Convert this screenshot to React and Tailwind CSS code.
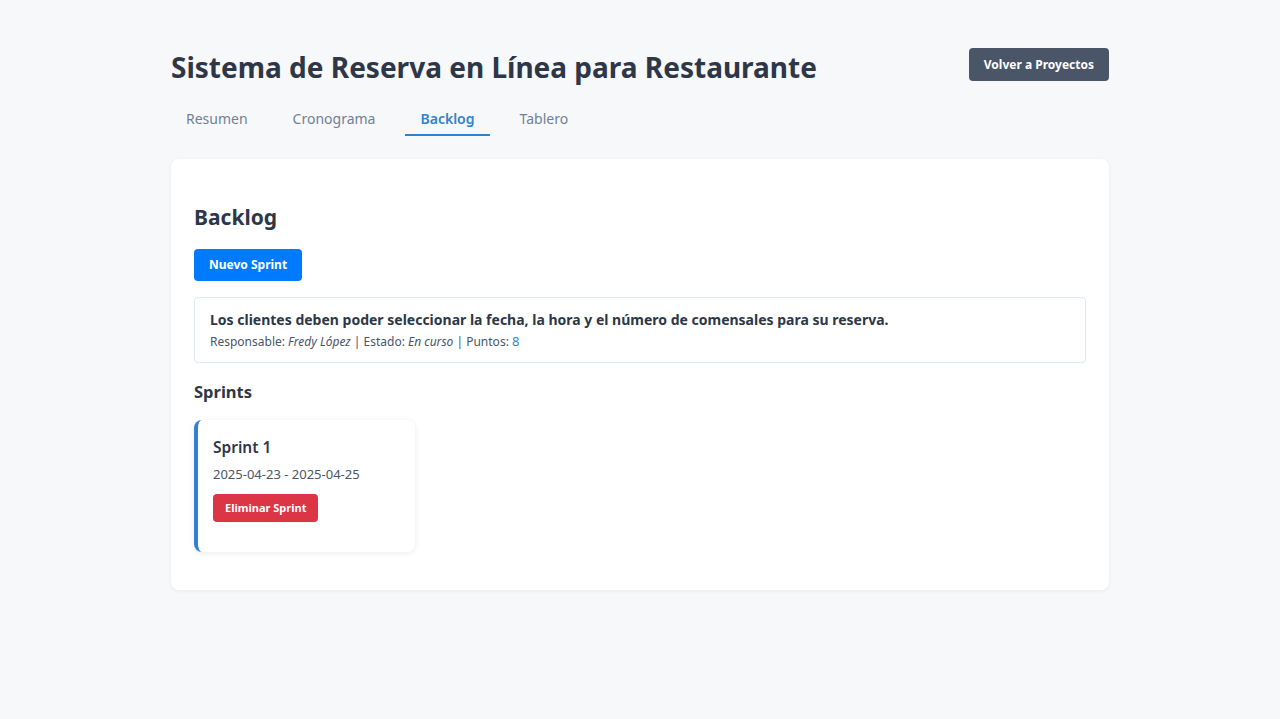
import React from 'react';

const tabs = ['Resumen', 'Cronograma', 'Backlog', 'Tablero'];

const App = () => {
  const active = 'Backlog';

  return (
    <div className="min-h-screen bg-[#f7f8fa] text-[#2d3748] font-['Segoe_UI','Noto_Sans',sans-serif]">
      <div className="w-[938px] mx-auto pt-[46px]">
        {/* Header */}
        <div className="flex items-start justify-between">
          <h1 className="text-[28px] font-bold leading-[42px] text-[#2d3748]">
            Sistema de Reserva en Línea para Restaurante
          </h1>
          <button className="mt-[2px] h-[33px] px-[15px] rounded-[4px] bg-[#4a5568] text-white text-[12px] font-bold">
            Volver a Proyectos
          </button>
        </div>

        {/* Tabs */}
        <div className="flex gap-[15px] mt-[16px]">
          {tabs.map((t) => (
            <div
              key={t}
              className={
                t === active
                  ? 'px-[15px] pt-[4px] pb-[5px] text-[14px] font-semibold text-[#3182ce] border-b-2 border-[#3182ce]'
                  : 'px-[15px] pt-[4px] pb-[5px] text-[14px] text-[#718096] border-b-2 border-transparent'
              }
            >
              {t}
            </div>
          ))}
        </div>

        {/* Content card */}
        <div className="mt-[23px] bg-white rounded-[8px] shadow-[0_1px_4px_rgba(0,0,0,0.06)] px-[23px] pt-[43px] pb-[38px]">
          <h2 className="text-[21px] font-bold leading-[30px]">Backlog</h2>

          <button className="mt-[17px] h-[32px] px-[15px] rounded-[4px] bg-[#007bff] text-white text-[12px] font-bold">
            Nuevo Sprint
          </button>

          <div className="mt-[16px] border border-[#e2e8f0] rounded-[4px] px-[15px] pt-[12px] pb-[11px]">
            <div className="text-[14px] font-bold leading-[20px] text-[#2d3748]">
              Los clientes deben poder seleccionar la fecha, la hora y el número de comensales para su reserva.
            </div>
            <div className="mt-[2px] text-[12px] leading-[18px] text-[#4a5568]">
              Responsable: <em>Fredy López</em> | Estado: <em>En curso</em> | Puntos:{' '}
              <span className="text-[#3182ce] text-[13px]">8</span>
            </div>
          </div>

          <h3 className="mt-[16px] text-[16.5px] font-bold leading-[26px]">Sprints</h3>

          <div className="mt-[15px] w-[221px] bg-white rounded-[8px] border-l-[4px] border-[#3182ce] shadow-[0_1px_6px_rgba(0,0,0,0.08)] pl-[15px] pr-[18px] pt-[15px] pb-[30px]">
            <div className="text-[15.5px] font-semibold leading-[24px] text-[#2d3748]">Sprint 1</div>
            <div className="mt-[6px] text-[13px] leading-[18px] text-[#4a5568]">2025-04-23 - 2025-04-25</div>
            <button className="mt-[11px] h-[28px] px-[12px] rounded-[4px] bg-[#dc3545] text-white text-[11px] font-bold">
              Eliminar Sprint
            </button>
          </div>
        </div>
      </div>
    </div>
  );
};

export default App;
